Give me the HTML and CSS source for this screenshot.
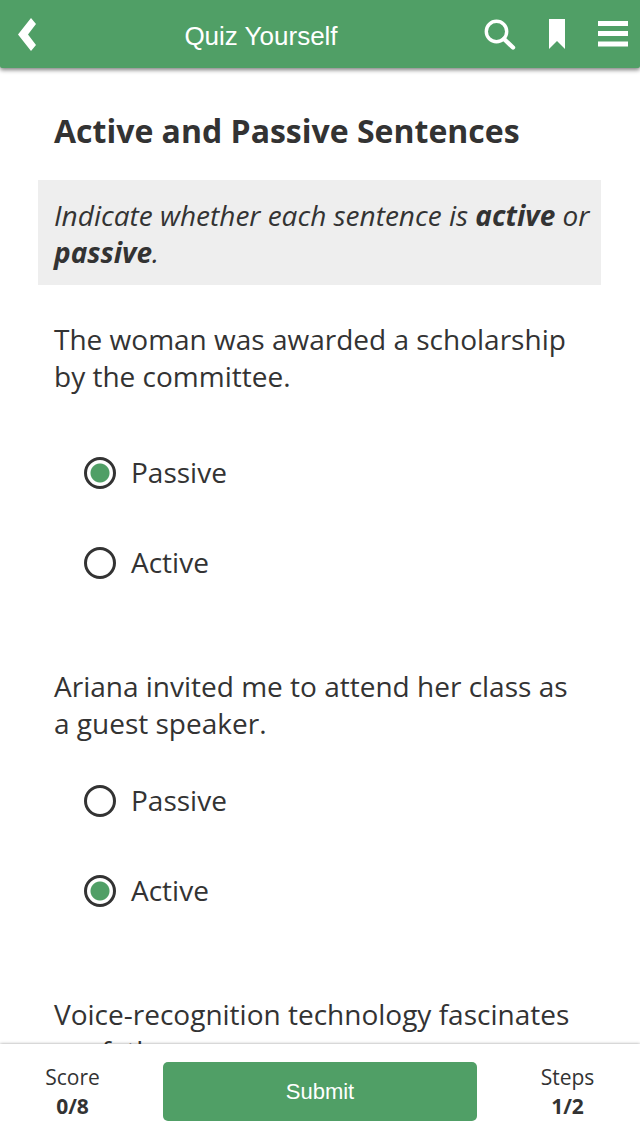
FILE: index.html
```
<!DOCTYPE html>
<html lang="en">
<head>
    <meta charset="UTF-8">
    <meta name="viewport" content="width=device-width, initial-scale=1.0">
    <title>Quiz Yourself</title>
    <link rel="stylesheet" href="styles.css">
</head>
<body>
    <header class="top-bar">
        <button type="button" class="icon-button back-button" aria-label="Back">
            <svg width="20" height="34" viewBox="0 0 20 34"><path d="M13 1 L18 7 L10 17.5 L18 28 L13 34 L0 17.5 Z" fill="#fff"/></svg>
        </button>
        <h1 class="top-title">Quiz Yourself</h1>
        <div class="top-actions">
            <button type="button" class="icon-button" aria-label="Search">
                <svg width="32" height="32" viewBox="0 0 32 32" fill="none" stroke="#fff"><circle cx="12.5" cy="13.5" r="10.2" stroke-width="3.4"/><path d="M20 21 L29 29.5" stroke-width="4.4" stroke-linecap="round"/></svg>
            </button>
            <button type="button" class="icon-button" aria-label="Bookmark">
                <svg width="16" height="32" viewBox="0 0 16 32"><path d="M0 1 H16 V31 L8 23 L0 31 Z" fill="#fff"/></svg>
            </button>
            <button type="button" class="icon-button" aria-label="Menu">
                <svg width="30" height="32" viewBox="0 0 30 32"><path d="M0 3 H30 V8 H0 Z M0 13 H30 V18 H0 Z M0 23.5 H30 V28.5 H0 Z" fill="#fff"/></svg>
            </button>
        </div>
    </header>

    <main class="quiz">
        <h2 class="quiz-title">Active and Passive Sentences</h2>
        <p class="instructions">Indicate whether each sentence is <strong>active</strong> or <strong>passive</strong>.</p>

        <fieldset class="question first-question">
            <legend>The woman was awarded a scholarship by the committee.</legend>
            <div class="options">
                <label class="option"><input type="radio" name="q1" value="passive" checked> Passive</label>
                <label class="option"><input type="radio" name="q1" value="active"> Active</label>
            </div>
        </fieldset>

        <fieldset class="question">
            <legend>Ariana invited me to attend her class as a guest speaker.</legend>
            <div class="options">
                <label class="option"><input type="radio" name="q2" value="passive"> Passive</label>
                <label class="option"><input type="radio" name="q2" value="active" checked> Active</label>
            </div>
        </fieldset>

        <fieldset class="question">
            <legend>Voice-recognition technology fascinates my father.</legend>
        </fieldset>
    </main>

    <footer class="bottom-bar">
        <div class="stat">
            <span>Score</span>
            <strong>0/8</strong>
        </div>
        <button type="submit" class="submit-button">Submit</button>
        <div class="stat">
            <span>Steps</span>
            <strong>1/2</strong>
        </div>
    </footer>
</body>
</html>
```
FILE: styles.css
```
* {
    box-sizing: border-box;
    margin: 0;
    padding: 0;
}

body {
    display: flex;
    flex-direction: column;
    height: 100vh;
    background-color: #fff;
    color: #333;
    font-family: 'Open Sans', 'Noto Sans', sans-serif;
    font-size: 28px;
    line-height: 37px;
}

button {
    border: none;
    cursor: pointer;
    font-family: 'Liberation Sans', Arial, sans-serif;
}

/* top bar */
.top-bar {
    display: grid;
    grid-template-columns: 1fr auto 1fr;
    align-items: center;
    flex-shrink: 0;
    height: 68px;
    padding: 0 12px 0 18px;
    background-color: #509f66;
    border-radius: 0 0 2px 2px;
    box-shadow: 0 2px 4px rgba(0, 0, 0, 0.5);
    color: #fff;
    z-index: 1;
}

.icon-button {
    display: flex;
    background: none;
}

.back-button {
    justify-self: start;
}

.top-title {
    padding-top: 4px;
    font-family: 'Liberation Sans', Arial, sans-serif;
    font-size: 26px;
    font-weight: normal;
    margin-right: 124px;
}

.top-actions {
    display: flex;
    justify-content: flex-end;
    gap: 33px;
}

/* quiz */
.quiz {
    flex: 1;
    min-height: 0;
    padding: 40px 39px 40px 38px;
    overflow-y: auto;
    scrollbar-width: none;
}

.quiz-title {
    padding: 0 16px;
    margin-bottom: 27px;
    font-size: 32px;
    line-height: 45px;
}

.instructions {
    padding: 17px 8px 14px 16px;
    margin-bottom: 36px;
    background-color: #eee;
    font-style: italic;
}

.question {
    border: none;
    padding: 0 16px;
    margin-bottom: 87px;
}

.options {
    display: flex;
    flex-direction: column;
    align-items: flex-start;
    gap: 53px;
    padding: 40px 0 0 30px;
}

.first-question .options {
    padding-top: 59px;
}

.option {
    display: flex;
    align-items: center;
    gap: 15px;
    cursor: pointer;
}

.option input {
    appearance: none;
    width: 32px;
    height: 32px;
    border: 3px solid #333;
    border-radius: 50%;
    background-color: #fff;
}

.option input:checked {
    background-image: radial-gradient(circle, #509f66 9px, #fff 10px);
}

/* bottom bar */
.bottom-bar {
    display: grid;
    grid-template-columns: 6fr 13fr 6fr;
    align-items: center;
    flex-shrink: 0;
    gap: 18px;
    height: 92px;
    padding-top: 3px;
    background-color: #fff;
    box-shadow: 0 0 3px rgba(0, 0, 0, 0.4);
    z-index: 1;
}

.stat {
    display: flex;
    flex-direction: column;
    align-items: center;
    font-size: 21px;
    line-height: 29px;
}

.submit-button {
    height: 59px;
    border-radius: 5px;
    background-color: #509f66;
    color: #fff;
    font-size: 22px;
}
```
